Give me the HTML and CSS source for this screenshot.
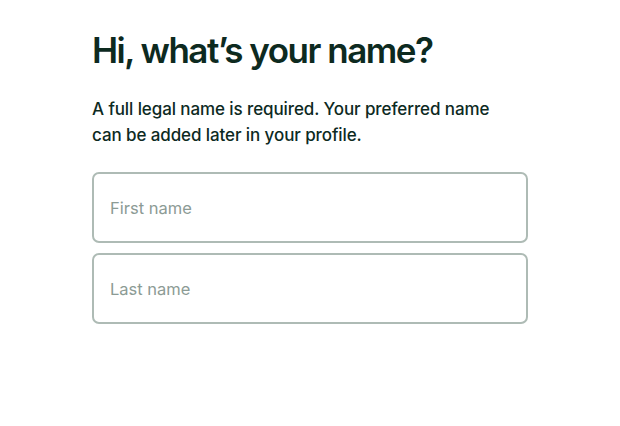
FILE: index.html
```html
<!DOCTYPE html>
<html lang="en">
<head>
  <meta charset="UTF-8" />
  <meta name="viewport" content="width=device-width, initial-scale=1" />
  <title>Your name</title>
  <link rel="stylesheet" href="styles.css">
</head>
<body>

<div class="form">
  <h1>Hi, what’s your name?</h1>
  <p class="hint">A full legal name is required. Your preferred name can be added later in your profile.</p>
  <input type="text" class="field" placeholder="First name" />
  <input type="text" class="field" placeholder="Last name" />
</div>

</body>
</html>
```

FILE: styles.css
```css
body {
  margin: 0;
  padding: 0;
  font-family: Inter, 'Noto Sans', sans-serif;
  background: #fff;
  color: #0d2a1f;
}
.form {
  width: 436px;
  margin: 0 auto;
  padding-top: 28px;
  display: flex;
  flex-direction: column;
}
h1 {
  margin: 0;
  font-size: 35px;
  line-height: 44px;
  font-weight: 600;
  letter-spacing: -1.5px;
}
.hint {
  margin: 24px 0 24px;
  font-size: 17px;
  line-height: 26px;
  font-weight: 500;
  letter-spacing: -0.1px;
  width: 420px;
}
.field {
  height: 71px;
  box-sizing: border-box;
  border: 2px solid #aebbb5;
  border-radius: 7px;
  padding: 0 16px;
  font-family: inherit;
  font-size: 16.5px;
  color: #0d2a1f;
  margin-bottom: 10px;
  outline: none;
}
.field::placeholder {
  color: #8c9b95;
}
```
